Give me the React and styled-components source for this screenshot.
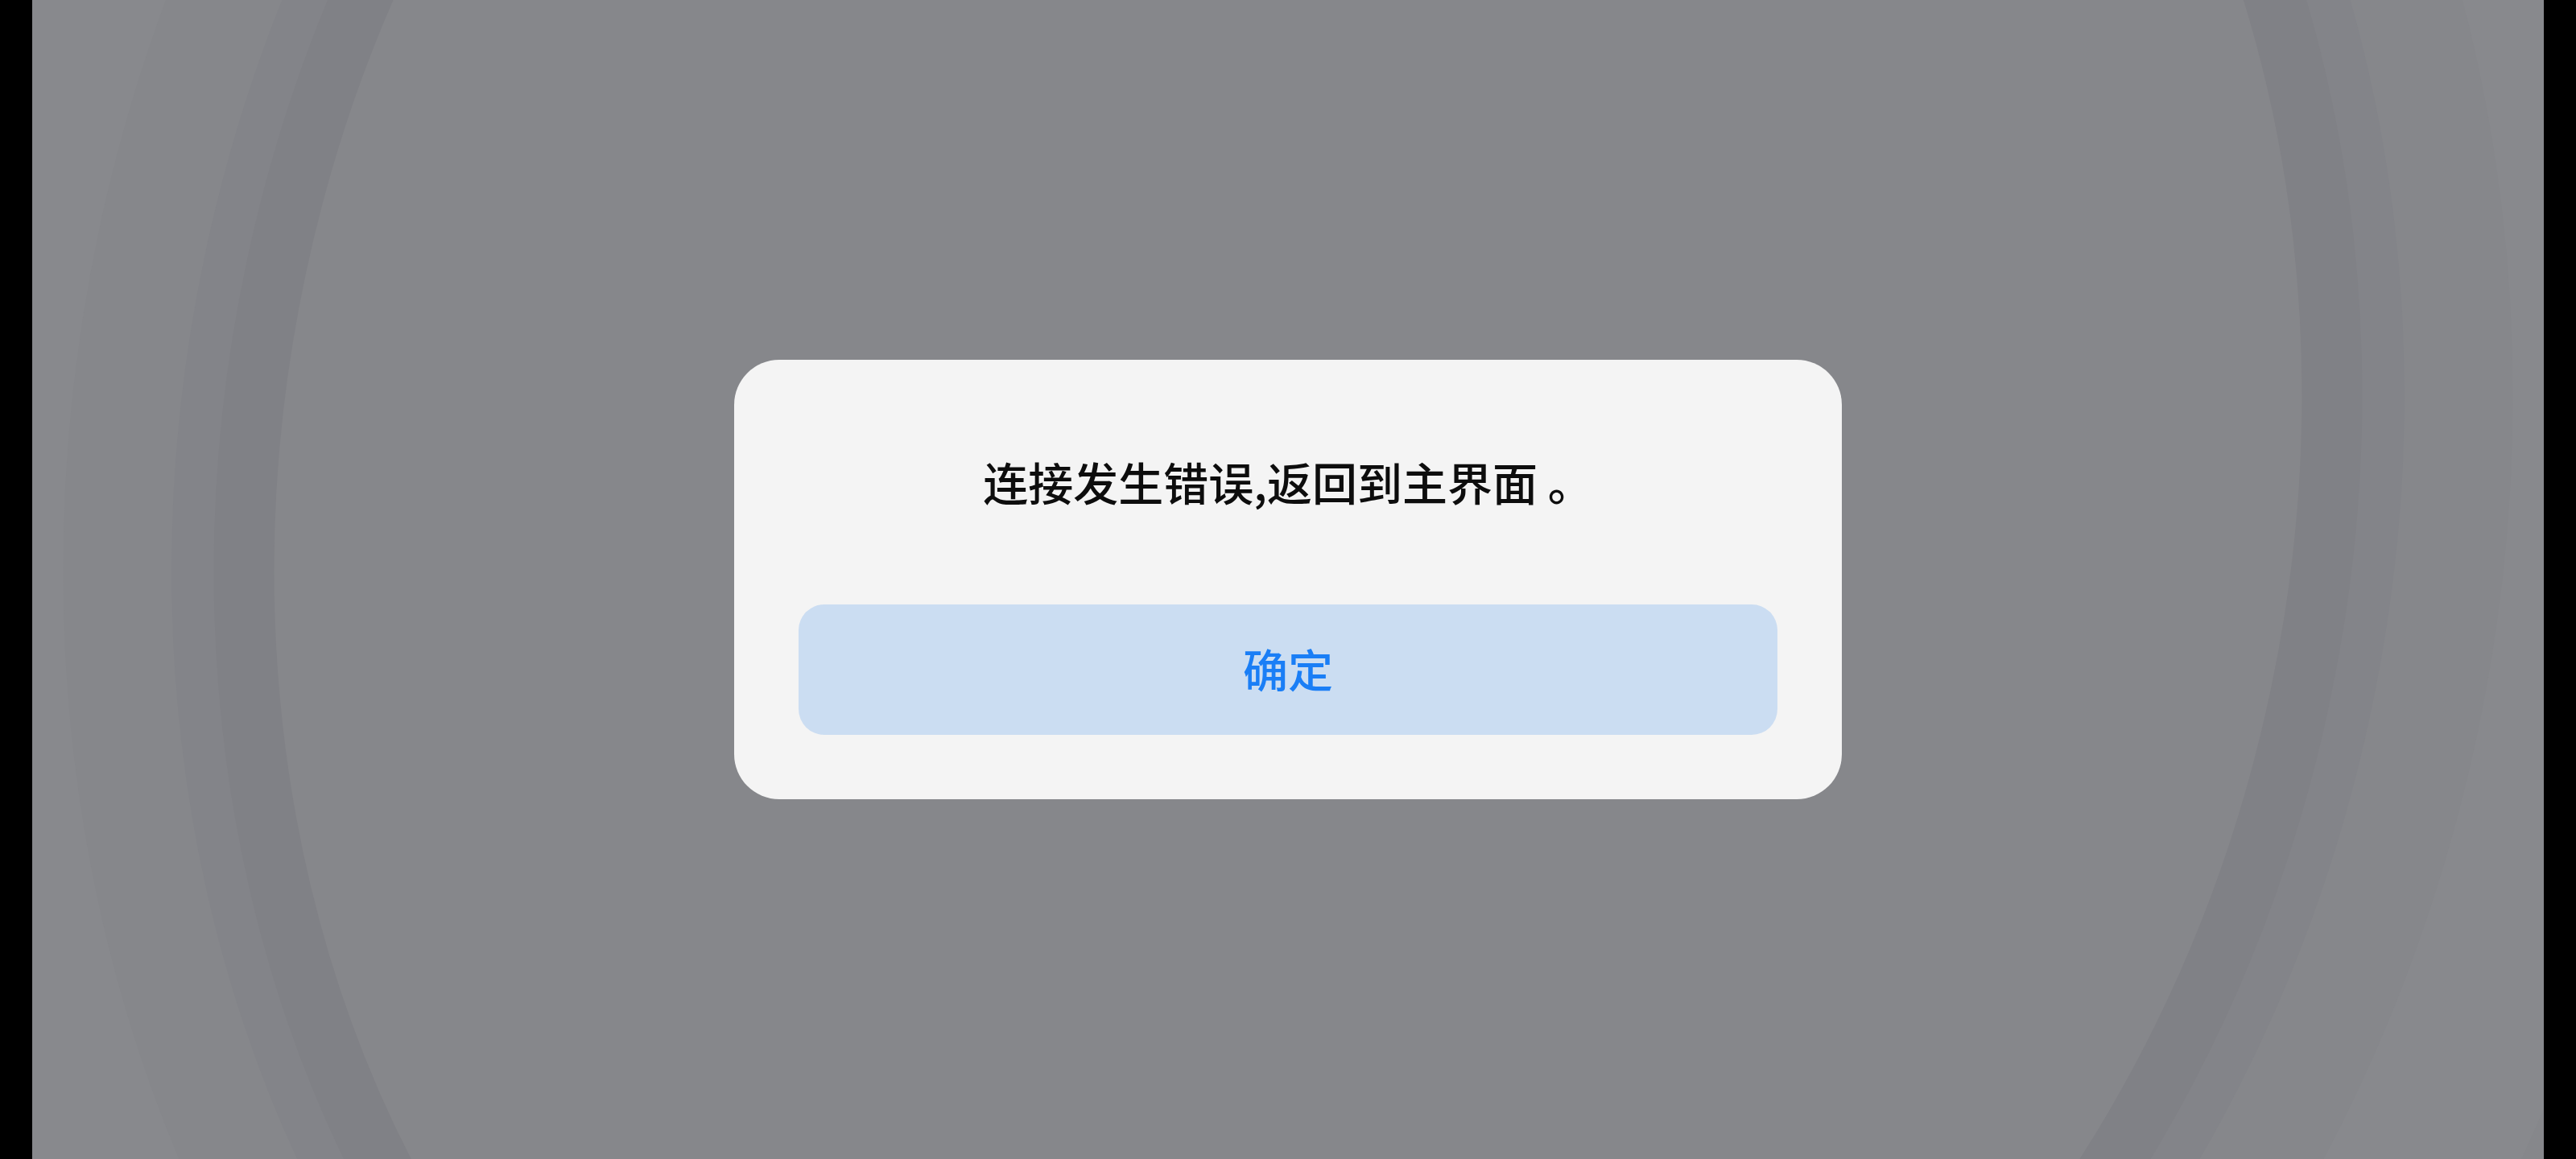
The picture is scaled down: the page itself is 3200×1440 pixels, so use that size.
import React from 'react';
import styled, { createGlobalStyle } from 'styled-components';

const GlobalStyle = createGlobalStyle`
  html, body {
    margin: 0;
    padding: 0;
    background: #000;
  }
  body {
    font-family: "Noto Sans CJK SC", "Noto Sans", sans-serif;
  }
`;

const Screen = styled.div`
  width: 3200px;
  height: 1440px;
  display: flex;
  background: #000;
  overflow: hidden;
`;

const Bezel = styled.div`
  width: 40px;
  flex: none;
  background: #000;
`;

const Stage = styled.div`
  position: relative;
  flex: 1;
  display: flex;
  align-items: center;
  justify-content: center;
  background: #86878b;
  box-shadow: inset 6px 0 0 #8b8c90;
  overflow: hidden;
`;

// blurred wallpaper behind the dialog
const Wallpaper = styled.svg`
  position: absolute;
  inset: 0;
  width: 100%;
  height: 100%;
  pointer-events: none;
`;

const Dialog = styled.div`
  position: relative;
  width: 1376px;
  box-sizing: border-box;
  padding: 111px 80px 80px;
  display: flex;
  flex-direction: column;
  align-items: center;
  gap: 113px;
  background: #f4f4f4;
  border-radius: 56px;
`;

const Message = styled.div`
  font-size: 56px;
  line-height: 80px;
  font-weight: 500;
  color: #0d0d0d;
  white-space: pre;
`;

const ConfirmButton = styled.button`
  width: 100%;
  height: 162px;
  padding: 0 0 6px;
  border: none;
  border-radius: 32px;
  background: #cbddf2;
  color: #1a7ef6;
  font-family: inherit;
  font-size: 56px;
  font-weight: 500;
  cursor: pointer;
`;

export default function App() {
  return (
    <>
      <GlobalStyle />
      <Screen>
        <Bezel />
        <Stage>
          <Wallpaper viewBox="0 0 3120 1440" preserveAspectRatio="none">
            <g transform="rotate(12 1560 600)" fill="none">
              <ellipse cx="1560" cy="600" rx="1620" ry="1870" stroke="#88898d" strokeWidth="220" />
              <ellipse cx="1560" cy="600" rx="1345" ry="1595" stroke="#838489" strokeWidth="60" />
              <ellipse cx="1560" cy="600" rx="1285" ry="1535" stroke="#808186" strokeWidth="75" />
            </g>
          </Wallpaper>
          <Dialog>
            <Message>{'连接发生错误,返回到主界面 。'}</Message>
            <ConfirmButton>确定</ConfirmButton>
          </Dialog>
        </Stage>
        <Bezel />
      </Screen>
    </>
  );
}
